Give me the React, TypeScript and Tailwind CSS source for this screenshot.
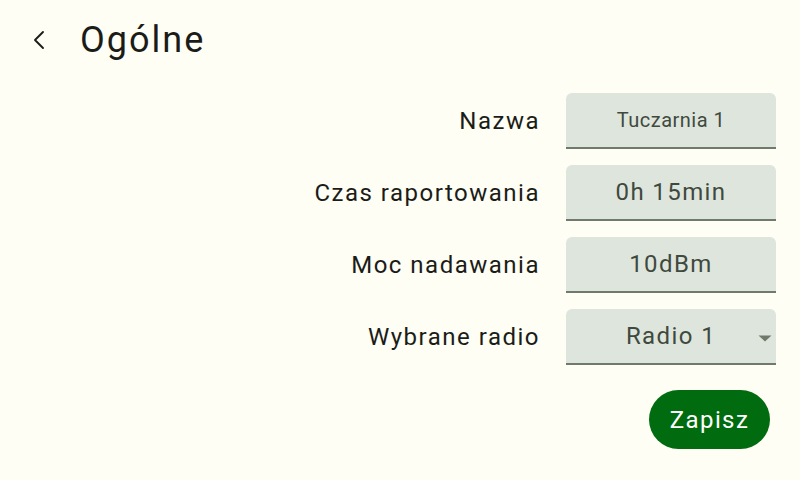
import { ChevronLeft } from 'lucide-react';

const fields = [
  { label: 'Nazwa', value: 'Tuczarnia 1', small: true },
  { label: 'Czas raportowania', value: '0h 15min' },
  { label: 'Moc nadawania', value: '10dBm' },
  { label: 'Wybrane radio', value: 'Radio 1', select: true },
];

export default function App() {
  return (
    <div
      className="w-[800px] h-[480px] bg-[#fefef5] text-[#1b1c18] overflow-hidden"
      style={{ fontFamily: 'Roboto, "Noto Sans", sans-serif' }}
    >
      <header className="flex items-center h-[80px] pl-[23px]">
        <ChevronLeft className="w-[32px] h-[32px] text-[#1b1c18]" strokeWidth={1.4} />
        <h1 className="ml-[25px] text-[36px] leading-none tracking-[2px]">Ogólne</h1>
      </header>

      <div className="flex flex-col items-end pr-[24px] mt-[13px]">
        <div className="flex flex-col gap-[16px]">
          {fields.map((f) => (
            <div key={f.label} className="flex items-center">
              <span className="w-[540px] text-right text-[24px] tracking-[1.5px]">{f.label}</span>
              <div className="relative ml-[26px] w-[210px] h-[56px] rounded-t-[6px] bg-[#dee5dd] border-b-2 border-[#707a6c] flex items-center justify-center text-[#3f4a3d]">
                <span className={f.small ? 'text-[20px] tracking-[0.5px]' : 'text-[24px] tracking-[1.4px]'}>
                  {f.value}
                </span>
                {f.select && (
                  <svg
                    className="absolute right-[4px] top-[26px]"
                    width="14"
                    height="7"
                    viewBox="0 0 14 7"
                  >
                    <path d="M0.5 0.5h13L7 6.5z" fill="#707a6c" />
                  </svg>
                )}
              </div>
            </div>
          ))}
        </div>
        <button className="mt-[25px] mr-[6px] h-[59px] w-[121px] rounded-full bg-[#006b0f] text-white text-[24px] tracking-[1.4px]">
          Zapisz
        </button>
      </div>
    </div>
  );
}
